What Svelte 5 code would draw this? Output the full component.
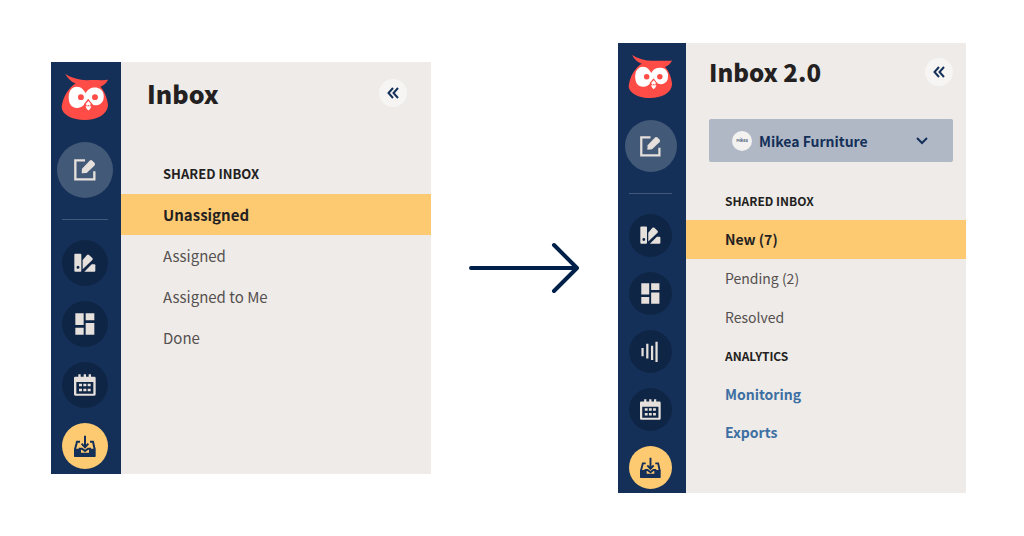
<script lang="ts">
	interface NavItem {
		label: string;
		kind?: 'item' | 'heading' | 'link';
		active?: boolean;
	}

	interface Panel {
		id: string;
		title: string;
		account?: string;
		tools: string[];
		items: NavItem[];
	}

	const before: Panel = {
		id: 'before',
		title: 'Inbox',
		tools: ['Content', 'Boards', 'Planner', 'Inbox'],
		items: [
			{ label: 'SHARED INBOX', kind: 'heading' },
			{ label: 'Unassigned', active: true },
			{ label: 'Assigned' },
			{ label: 'Assigned to Me' },
			{ label: 'Done' }
		]
	};

	const after: Panel = {
		id: 'after',
		title: 'Inbox 2.0',
		account: 'Mikea Furniture',
		tools: ['Content', 'Boards', 'Analytics', 'Planner', 'Inbox'],
		items: [
			{ label: 'SHARED INBOX', kind: 'heading' },
			{ label: 'New (7)', active: true },
			{ label: 'Pending (2)' },
			{ label: 'Resolved' },
			{ label: 'ANALYTICS', kind: 'heading' },
			{ label: 'Monitoring', kind: 'link' },
			{ label: 'Exports', kind: 'link' }
		]
	};
</script>

{#snippet toolIcon(name: string)}
	<svg class="icon" viewBox="0 0 66 66" fill="currentColor" aria-hidden="true">
		{#if name === 'Compose'}
			<path d="M33 4H4V61H61V37" fill="none" stroke="currentColor" stroke-width="7" />
			<path d="M23 43L24 29L47 5Q51 1 55 5L62 12Q65 16 61 20L38 42Z" />
		{:else if name === 'Content'}
			<path fill-rule="evenodd" d="M4 5H19Q22 5 22 8V56Q22 59 19 59H4Q1 59 1 56V8Q1 5 4 5ZM12 41A4.500 4.500 0 1 0 12 50A4.500 4.500 0 1 0 12 41Z" />
			<path d="M26 24L39 9Q42 6 45 9L55 18Q58 21 55 24L26 52Z" />
			<path d="M31 59L53 37H61Q64 37 64 40V56Q64 59 61 59Z" />
		{:else if name === 'Boards'}
			<path d="M4 1H29V36H4ZM4 44H29V65H4ZM35 1H61V22H35ZM35 30H61V65H35Z" />
		{:else if name === 'Analytics'}
			<path d="M8 22V48M23 9V55M38 15V60M52 2V66" fill="none" stroke="currentColor" stroke-width="7" />
		{:else if name === 'Planner'}
			<path fill-rule="evenodd" d="M3 8H13V1H20V8H29V1H36V8H44V1H51V8H61Q65 8 65 12V61Q65 65 61 65H4Q0 65 0 61V12Q0 8 3 8ZM7 24V59H58V24Z" />
			<path d="M15 29H24V37H15ZM28 29H37V37H28ZM41 29H50V37H41ZM15 44H24V52H15ZM28 44H37V52H28ZM41 44H50V52H41Z" />
		{:else}
			<path d="M0 41H21V53H45V41H65V64Q65 66 63 66H2Q0 66 0 64Z" />
			<path d="M18 20H9L3 43M48 20H57L62 43M14 41H24L33 48L42 41H51" fill="none" stroke="currentColor" stroke-width="6" />
			<path d="M33 2V35M23 26L33 37L43 26" fill="none" stroke="currentColor" stroke-width="6" />
		{/if}
	</svg>
{/snippet}

{#snippet panelView(panel: Panel)}
	<section class="panel {panel.id}">
		<aside class="rail">
			<svg class="logo" viewBox="45 53 147 145" role="img" aria-label="Owl logo">
				<path fill="#ff4c46" d="M58 55C80 68 104 75 128 74C152 73 172 76 189 73C184 84 176 90 166 94C178 108 187 128 189 151C187 180 154 196 118 196C80 196 48 180 47 157C50 132 60 112 74 97C79 91 84 87 90 84C78 80 66 70 58 55Z" />
				<path fill="#fff" d="M69 134C66 111 76 95 93 94C109 94 115 105 121 114C127 100 143 94 158 98C175 103 179 121 174 136C168 151 150 155 138 146L129 132L119 145C112 156 103 160 93 159C79 158 71 150 69 134Z" />
				<circle cx="106" cy="126" r="9" fill="#ff4c46" />
				<circle cx="149" cy="126" r="9" fill="#ff4c46" />
				<path fill="#ff4c46" d="M128 132L142 148L137 162L129 170L120 162L116 147Z" />
				<path fill="#fff" d="M129 138L136 146L134 153L129 150L124 153L121 146ZM120 154L129 154L138 154L134 162L129 167L124 162Z" />
			</svg>
			<button class="compose" aria-label="Compose">{@render toolIcon('Compose')}</button>
			<div class="divider"></div>
			<nav class="tools">
				{#each panel.tools as tool}
					<button class="tool" class:current={tool === 'Inbox'} aria-label={tool}>
						{@render toolIcon(tool)}
					</button>
				{/each}
			</nav>
		</aside>

		<div class="content">
			<header>
				<h2>{panel.title}</h2>
				<button class="collapse" aria-label="Collapse">
					<svg viewBox="0 0 12 12" fill="none" stroke="currentColor" stroke-width="2">
						<path d="M6 1L1.500 6L6 11M11 1L6.500 6L11 11" />
					</svg>
				</button>
			</header>

			{#if panel.account}
				<div class="account">
					<svg class="avatar" viewBox="0 0 20 20" aria-hidden="true">
						<circle cx="10" cy="10" r="10" fill="#f3f2f1" />
						<text x="10" y="11" text-anchor="middle" font-size="4" font-weight="700" fill="#4f6079">Mikea</text>
					</svg>
					<select aria-label="Account">
						<option>{panel.account}</option>
					</select>
					<svg class="chevron" viewBox="0 0 12 8" fill="none" stroke="#143059" stroke-width="2" aria-hidden="true">
						<path d="M1 1L6 6L11 1" />
					</svg>
				</div>
			{/if}

			<ul class="menu">
				{#each panel.items as item}
					<li>
						{#if item.kind === 'heading'}
							<h3>{item.label}</h3>
						{:else}
							<a href="#{panel.id}" class:active={item.active} class:strong={item.kind === 'link'}>{item.label}</a>
						{/if}
					</li>
				{/each}
			</ul>
		</div>
	</section>
{/snippet}

<main>
	{@render panelView(before)}
	<svg class="arrow" viewBox="0 0 112 52" fill="none" stroke="#00204a" stroke-width="4" stroke-linecap="round" stroke-linejoin="round" aria-hidden="true">
		<path d="M3 26H109M86 3L109 26L86 49" />
	</svg>
	{@render panelView(after)}
</main>

<style>
	:global(body) {
		margin: 0;
		background: #fff;
	}

	main {
		display: flex;
		align-items: center;
		min-height: 100vh;
		box-sizing: border-box;
		padding: 0 58px 0 51px;
		font-family: 'Noto Sans CJK SC', 'Noto Sans', sans-serif;
		color: #241f21;
	}

	.panel {
		display: flex;
		min-width: 0;
		background: #eeebe8;
	}

	.before {
		--logo: 48px;
		--compose: 56px;
		--tool: 46px;
		--icon: 22px;
		--rail: 70px;
		--rail-end: 5px;
		--row: 41px;
		--heading-row: 41px;
		--indent: 42px;
		--title-indent: 26px;
		--header-top: 15px;
		--text: 15px;
		--label: 13px;
		--title: 25px;
		flex: 380 1 0;
	}

	.after {
		--logo: 45px;
		--compose: 52px;
		--tool: 43px;
		--icon: 21px;
		--rail: 68px;
		--rail-end: 4px;
		--row: 39px;
		--heading-row: 38px;
		--indent: 39px;
		--title-indent: 23px;
		--header-top: 13px;
		--text: 14px;
		--label: 12px;
		--title: 24px;
		flex: 348 1 0;
	}

	.rail {
		display: flex;
		flex-direction: column;
		align-items: center;
		flex: none;
		width: var(--rail);
		box-sizing: border-box;
		padding: 11px 3px var(--rail-end) 0;
		background: #143059;
	}

	.logo {
		width: var(--logo);
		height: var(--logo);
	}

	button {
		display: flex;
		align-items: center;
		justify-content: center;
		flex: none;
		padding: 0;
		border: none;
		border-radius: 50%;
		cursor: pointer;
	}

	.compose {
		width: var(--compose);
		height: var(--compose);
		margin: 21px 0;
		background: #435978;
		color: #e5e0db;
	}

	.divider {
		width: var(--tool);
		height: 1px;
		margin-bottom: 20px;
		background: #435978;
	}

	.tools {
		display: flex;
		flex-direction: column;
		gap: 15px;
	}

	.tool {
		width: var(--tool);
		height: var(--tool);
		background: #0f2545;
		color: #e5e0db;
	}

	.tool.current {
		background: #fdca72;
		color: #143059;
	}

	.icon {
		width: var(--icon);
		height: var(--icon);
	}

	.content {
		flex: 1;
		min-width: 0;
	}

	header {
		display: flex;
		align-items: center;
		justify-content: space-between;
		padding: var(--header-top) 24px 0 var(--title-indent);
	}

	.after header {
		padding-right: 13px;
	}

	h2 {
		margin: 0;
		font-size: var(--title);
		line-height: 32px;
		font-weight: 900;
	}

	.collapse {
		width: 28px;
		height: 28px;
		background: #f6f5f4;
		color: #143059;
	}

	.collapse svg {
		width: 12px;
		height: 12px;
	}

	.account {
		position: relative;
		margin: 31px 13px 0 var(--title-indent);
	}

	.account select {
		display: block;
		width: 100%;
		height: 43px;
		padding: 0 40px 0 50px;
		border: none;
		border-radius: 2px;
		background: #b0b8c6;
		color: #143059;
		font: inherit;
		font-size: 14px;
		font-weight: 700;
		appearance: none;
	}

	.avatar {
		position: absolute;
		left: 23px;
		top: 12px;
		width: 20px;
		height: 20px;
		pointer-events: none;
	}

	.chevron {
		position: absolute;
		right: 25px;
		top: 18px;
		width: 12px;
		height: 8px;
		pointer-events: none;
	}

	.menu {
		margin: 44px 0 0;
		padding: 0;
		list-style: none;
	}

	.after .menu {
		margin-top: 20px;
	}

	h3,
	.menu a {
		display: block;
		margin: 0;
		padding-left: var(--indent);
		line-height: var(--row);
	}

	h3 {
		font-size: var(--label);
		line-height: var(--heading-row);
		font-weight: 700;
	}

	.menu a {
		font-size: var(--text);
		color: #55504f;
		text-decoration: none;
	}

	.menu a.active {
		background: #fdca72;
		color: #241f21;
		font-weight: 700;
	}

	.menu a.strong {
		line-height: var(--heading-row);
		color: #3d6fa3;
		font-weight: 700;
	}

	.arrow {
		flex: none;
		width: 112px;
		height: 52px;
		margin: 0 38px 0 37px;
	}
</style>
